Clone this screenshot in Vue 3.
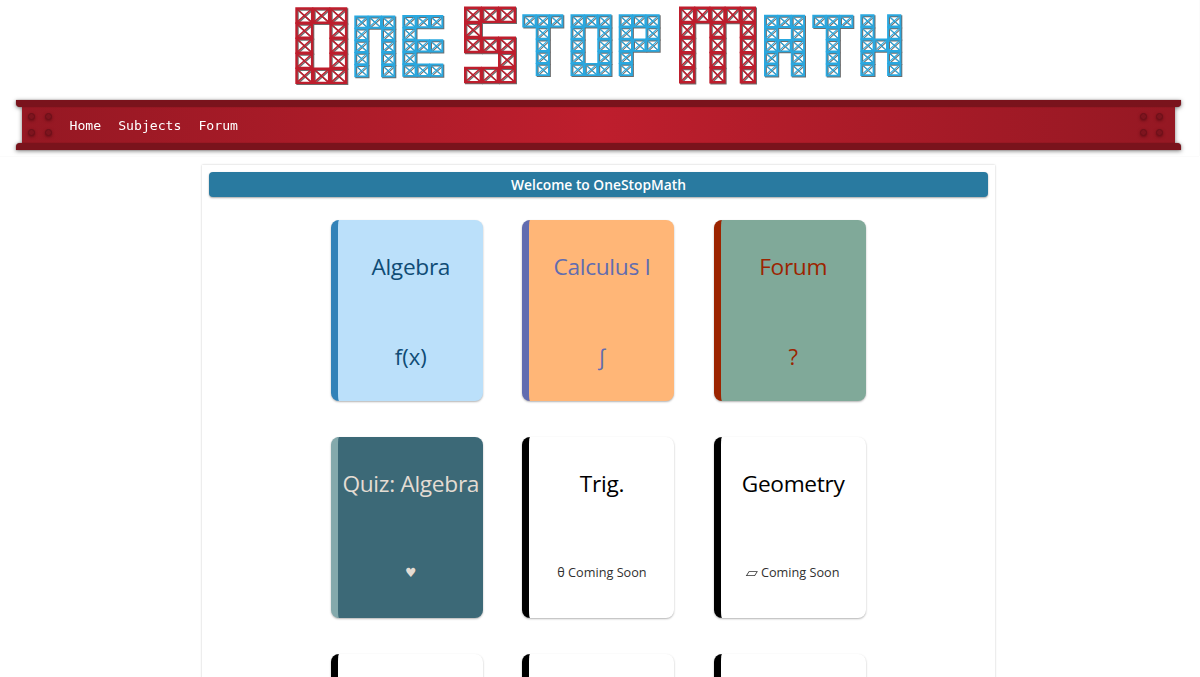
<script setup>
const B = { w: 14.2, h: 13.2, py: 12.15, f: 'blue' }
const R = { w: 18, h: 16.6, py: 15.05, f: 'red' }
const letters = [
  { x: 295.3, y: 7.3, width: 52, ...R, rows: ['111', '101', '101', '101', '111'] },
  { x: 354.3, y: 15.5, width: 41, ...B, rows: ['111', '101', '101', '101', '101'] },
  { x: 402.3, y: 15, width: 41, ...B, rows: ['111', '100', '111', '100', '111'] },
  { x: 464, y: 6.5, width: 52, ...R, rows: ['111', '100', '111', '001', '111'] },
  { x: 522.3, y: 14.3, width: 41, ...B, rows: ['111', '010', '010', '010', '010'] },
  { x: 570.5, y: 14.3, width: 41, ...B, rows: ['111', '101', '101', '101', '111'] },
  { x: 618.7, y: 14.3, width: 41, ...B, rows: ['111', '101', '111', '100', '100'] },
  { x: 679, y: 6.6, width: 77, ...R, w: 16.3, rows: ['11111', '10101', '10101', '10101', '10101'] },
  { x: 764, y: 14.8, width: 41, ...B, rows: ['111', '101', '111', '101', '101'] },
  { x: 812.3, y: 14.8, width: 41, ...B, rows: ['111', '010', '010', '010', '010'] },
  { x: 860.3, y: 14.3, width: 41, ...B, rows: ['101', '101', '111', '101', '101'] }
]
const cells = letters.flatMap(l => {
  const n = l.rows[0].length
  const px = (l.width - l.w) / (n - 1)
  return l.rows.flatMap((row, r) =>
    [...row].flatMap((v, c) => (v === '1' ? [{ x: l.x + c * px, y: l.y + r * l.py, w: l.w, h: l.h, f: l.f }] : []))
  )
})
function truss(c) {
  const t = c.f === 'red' ? 2.4 : 1.9
  const { x, y, w, h } = c
  return `M${x + t / 2} ${y + t / 2}h${w - t}v${h - t}h${t - w}z`
}
function brace(c) {
  const { x, y, w, h } = c
  return `M${x + 2} ${y + 2}L${x + w - 2} ${y + h - 2}M${x + w - 2} ${y + 2}L${x + 2} ${y + h - 2}`
}
const nav = ['Home', 'Subjects', 'Forum']
const cards = [
  { title: 'Algebra', sym: 'f(x)', cls: 'algebra' },
  { title: 'Calculus I', sym: '∫', cls: 'calculus' },
  { title: 'Forum', sym: '?', cls: 'forum' },
  { title: 'Quiz: Algebra', sym: '♥', cls: 'quiz', small: true },
  { title: 'Trig.', sym: 'θ', note: 'Coming Soon', cls: 'soon', small: true },
  { title: 'Geometry', sym: '▱', note: 'Coming Soon', cls: 'soon wide', small: true },
  { title: '', sym: '', cls: 'soon' },
  { title: '', sym: '', cls: 'soon' },
  { title: '', sym: '', cls: 'soon' }
]
</script>

<template>
  <div class="page">
    <header>
      <svg class="logo" width="1200" height="100" viewBox="0 0 1200 100" role="img" aria-label="One Stop Math">
        <g v-for="(c, i) in cells" :key="i" :class="c.f">
          <path class="frame" :d="truss(c)" />
          <path class="brace" :d="brace(c)" />
        </g>
      </svg>
      <nav class="beam">
        <div class="flange top"></div>
        <div class="web">
          <div class="rivets"><i v-for="n in 4" :key="n"></i></div>
          <div class="links"><a v-for="n in nav" :key="n">{{ n }}</a></div>
          <div class="rivets"><i v-for="n in 4" :key="n"></i></div>
        </div>
        <div class="flange bottom"></div>
      </nav>
    </header>
    <main>
      <h1>Welcome to OneStopMath</h1>
      <div class="grid">
        <section v-for="(c, i) in cards" :key="i" class="card" :class="c.cls">
          <div class="title">{{ c.title }}</div>
          <div class="sym" :class="{ small: c.small }"><span class="glyph">{{ c.sym }}</span><template v-if="c.note">&nbsp;{{ c.note }}</template></div>
        </section>
      </div>
    </main>
  </div>
</template>

<style>
html, body { overflow: hidden; background: #fff; }
</style>
<style scoped>
.page { width: 1200px; height: 677px; overflow: hidden; font-family: "Open Sans", "Noto Sans", "DejaVu Sans", sans-serif; }
header { height: 156px; width: 1199px; background: #fff; box-shadow: 0 0 1px rgba(0,0,0,.1); }
.logo { display: block; filter: drop-shadow(1px 1px .3px rgba(60,60,60,.75)); }
.logo path { fill: none; }
.red { stroke: #be1e2d; }
.red .frame { stroke-width: 2.4; }
.red .brace { stroke-width: 1.5; }
.blue { stroke: #29a8e0; }
.blue .frame { stroke-width: 1.9; }
.blue .brace { stroke-width: 1.1; }
.beam { width: 1165px; height: 50px; margin-left: 16px; display: flex; flex-direction: column; align-items: center; filter: drop-shadow(0 1px 2px rgba(0,0,0,.5)); }
.flange { width: 1165px; height: 7px; background: #7a131c; flex: none; z-index: 1; box-shadow: 0 0 1px rgba(60,0,5,.7); }
.top { border-radius: 0 0 4px 4px; }
.bottom { border-radius: 4px 4px 0 0; }
.web { width: 1153px; height: 36px; display: flex; align-items: center; background: linear-gradient(90deg, #951823, #be1e2d 50%, #951823); box-sizing: border-box; padding: 0 12px 1px 6px; }
.rivets { display: grid; grid-template-columns: 7px 7px; gap: 9.5px 9.5px; flex: none; }
.rivets i { width: 7px; height: 7px; box-sizing: border-box; border-radius: 50%; background: #7e141e; border: 1px solid #6b1019; box-shadow: 0 1px 3px rgba(60,0,8,.5); }
.links { flex: 1; display: flex; gap: 17px; padding: 2px 0 0 18px; font: 13.15px/18px "DejaVu Sans Mono", monospace; color: #fff; }
main { width: 793px; height: 560px; margin: 9px 0 0 202px; box-sizing: border-box; padding: 7px; background: #fff; box-shadow: 0 0 2px rgba(0,0,0,.22); }
h1 { margin: 0; height: 25px; border-radius: 4px; background: #297aa0; color: #fff; font-size: 13.8px; line-height: 26px; font-weight: 600; text-align: center; box-shadow: 0 1px 2px rgba(0,0,0,.35); }
.grid { display: grid; grid-template-columns: repeat(3, 152px); gap: 36px 39.2px; margin: 23px 0 0 122.3px; }
.card { height: 181px; box-sizing: border-box; border-left: 7.5px solid #000; border-radius: 8px; box-shadow: 0 1px 2px rgba(0,0,0,.3); text-align: center; display: grid; grid-template-rows: 93px 88px; line-height: 94px; color: #000; white-space: nowrap; }
.title { font-size: 22.7px; letter-spacing: -.3px; }
.sym { font-size: 22px; line-height: 87px; }
.sym.small { font-size: 12.7px; line-height: 85px; }
.glyph { display: inline-block; }
.wide .glyph { transform: scaleX(1.25); margin-right: 1px; }
.algebra { background: #bbe0fa; border-color: #3282b8; color: #0f4c75; }
.calculus { background: #ffb677; border-color: #616cb0; color: #616cb0; }
.forum { background: #80a999; border-color: #9c2400; color: #9c2400; }
.quiz { background: #3c6977; border-color: #84a9ac; color: #e4dcd3; }
.soon { background: #fff; }
.soon .sym { color: #303030; }
</style>
